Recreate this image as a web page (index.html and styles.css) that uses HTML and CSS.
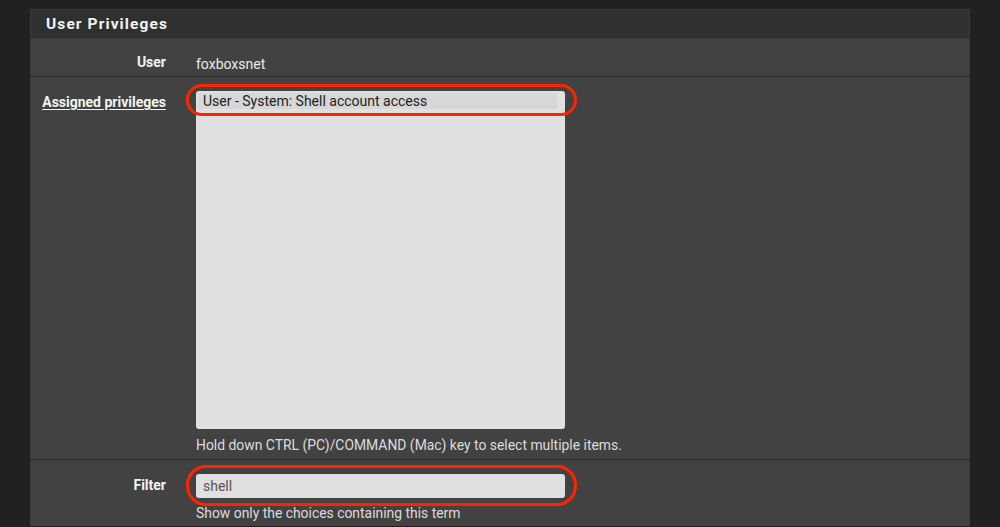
FILE: index.html
```html
<!DOCTYPE html>
<html>
<head>
<meta charset="utf-8">
<link rel="stylesheet" href="styles.css">
</head>
<body>
<div class="panel">
  <div class="panel-heading">User Privileges</div>
  <div class="panel-body">
    <div class="row row-user">
      <div class="label">User</div>
      <div class="value"><span class="static">foxboxsnet</span></div>
    </div>
    <div class="row row-priv">
      <div class="label"><span class="link">Assigned privileges</span></div>
      <div class="value">
        <div class="mark-wrap">
          <div class="select">
            <div class="option selected">User - System: Shell account access</div>
          </div>
          <span class="mark mark-priv"></span>
        </div>
        <div class="help">Hold down CTRL (PC)/COMMAND (Mac) key to select multiple items.</div>
      </div>
    </div>
    <div class="row row-filter">
      <div class="label">Filter</div>
      <div class="value">
        <div class="mark-wrap">
          <div class="input">shell</div>
          <span class="mark mark-filter"></span>
        </div>
        <div class="help">Show only the choices containing this term</div>
      </div>
    </div>
  </div>
</div>
</body>
</html>
```

FILE: styles.css
```css
html, body {
  margin: 0;
  padding: 0;
  background: #212121;
  font-family: Roboto, "Liberation Sans", sans-serif;
  height: 527px;
  overflow: hidden;
}
.panel {
  margin: 9px 0 0 30px;
  width: 940px;
  border: 1px solid #3a3a3a;
  border-bottom: none;
  box-sizing: border-box;
  background: #424242;
}
.panel-heading {
  background: #303030;
  color: #f4f4f4;
  font-weight: 700;
  font-size: 15.5px;
  letter-spacing: 1.1px;
  height: 27px;
  line-height: 28px;
  padding-left: 15px;
  border-bottom: 1px solid #262626;
}
.row {
  display: grid;
  grid-template-columns: 135px 369px;
  column-gap: 30px;
  border-bottom: 1px solid #2a2a2a;
}
.label {
  text-align: right;
  color: #f4f4f4;
  font-weight: 700;
  font-size: 14px;
  line-height: 17px;
  white-space: nowrap;
}
.row-user {
  height: 39px;
  box-sizing: border-box;
  padding-top: 16px;
}
.static {
  color: #ececec;
  font-size: 14px;
  line-height: 17px;
}
.row-priv {
  padding-top: 14px;
  height: 368px;
}
.row-priv .label { padding-top: 3px; }
.link {
  text-decoration: underline;
  text-underline-offset: 2px;
}
.mark-wrap {
  position: relative;
}
.select {
  height: 338px;
  background: #e0e0e0;
  border-radius: 3px;
  box-sizing: border-box;
  padding: 2px 8px 0 2px;
}
.option {
  font-size: 14px;
  color: #222;
  line-height: 16px;
  padding-left: 5px;
  background: #d7d7d7;
}
.help {
  color: #dcdcdc;
  font-size: 13.9px;
  line-height: 16px;
  margin-top: 8px;
  white-space: nowrap;
}
.row-filter {
  padding-top: 14px;
  height: 52px;
  border-bottom: none;
}
.row-filter .label { padding-top: 3px; }
.input {
  height: 24px;
  line-height: 24px;
  background: #e0e0e0;
  border-radius: 3px;
  color: #555;
  font-size: 14px;
  padding-left: 7px;
}
.row-filter .help { margin-top: 7px; }
.mark {
  position: absolute;
  border: 3px solid #ff2400;
  box-sizing: border-box;
  left: -10px;
  right: -12px;
}
.mark-priv {
  top: -7px;
  height: 32px;
  border-radius: 16px;
}
.mark-filter {
  top: -9px;
  height: 41px;
  border-radius: 20px;
}
```
